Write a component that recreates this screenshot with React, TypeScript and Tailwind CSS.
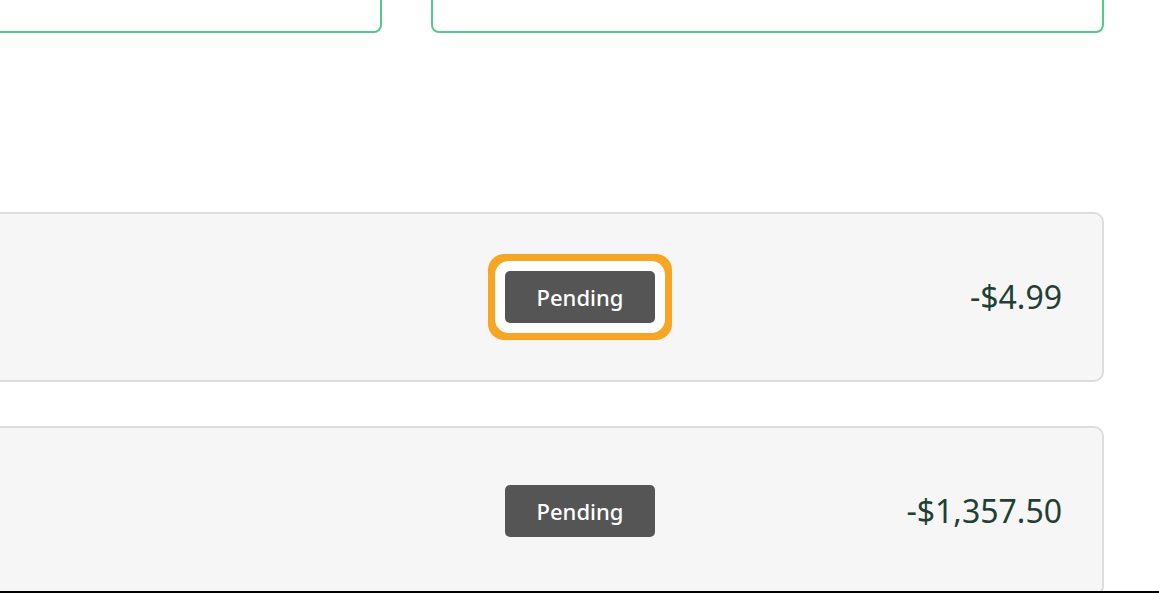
import React from "react";

// ─── Data ─────────────────────────────────────────────────────────────────────

interface Txn {
  id: string;
  status: string;
  amount: string;
  focused?: boolean;
}

const TXNS: Txn[] = [
  { id: "t1", status: "Pending", amount: "-$4.99", focused: true },
  { id: "t2", status: "Pending", amount: "-$1,357.50" },
];

// ─── Pieces ───────────────────────────────────────────────────────────────────

function StatusBadge({ label, focused }: { label: string; focused?: boolean }) {
  return (
    <span
      className={
        focused
          ? "inline-flex h-[52px] w-[150px] items-center justify-center rounded-[5px] bg-[#555555] text-[22px] font-medium text-white ring-[7px] ring-[#f6a623] ring-offset-[10px] ring-offset-white"
          : "inline-flex h-[52px] w-[150px] items-center justify-center rounded-[5px] bg-[#555555] text-[22px] font-medium text-white"
      }
    >
      {label}
    </span>
  );
}

function TxnRow({ txn }: { txn: Txn }) {
  return (
    <li className="flex h-[170px] items-center rounded-[10px] border-2 border-[#dddddd] bg-[#f6f6f6] pr-[40px]">
      <div className="flex-1" />
      <StatusBadge label={txn.status} focused={txn.focused} />
      <div className="w-[407px] text-right text-[32px] text-[#1f4034]">
        {txn.amount}
      </div>
    </li>
  );
}

// ─── App ──────────────────────────────────────────────────────────────────────

export default function App() {
  return (
    <div
      className="h-[593px] overflow-hidden border-b-2 border-black bg-white"
      style={{ fontFamily: '"Noto Sans", "Open Sans", sans-serif' }}
    >
      <div className="-ml-[12px] mr-[55px]">
        {/* summary cards (scrolled mostly out of view) */}
        <div className="-mt-[80px] flex gap-[49px]">
          <div className="h-[113px] w-[394px] rounded-[8px] border-2 border-[#55c98a] bg-white" />
          <div className="h-[113px] flex-1 rounded-[8px] border-2 border-[#55c98a] bg-white" />
        </div>

        {/* transactions */}
        <ul className="mt-[179px] flex flex-col gap-[44px]">
          {TXNS.map((t) => (
            <TxnRow key={t.id} txn={t} />
          ))}
        </ul>
      </div>
    </div>
  );
}
